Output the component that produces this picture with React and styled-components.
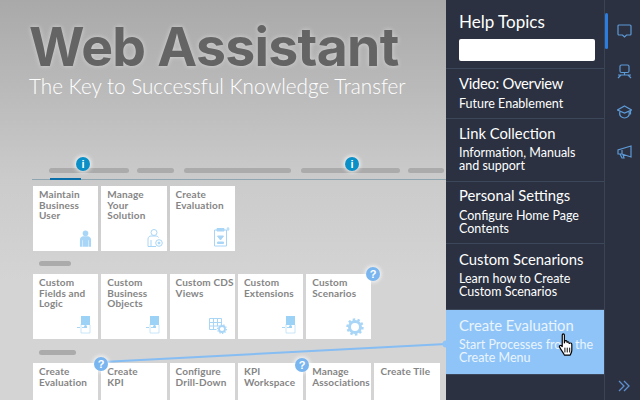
import React from "react";
import styled, { createGlobalStyle } from "styled-components";

const Global = createGlobalStyle`
  html, body { margin: 0; padding: 0; width: 640px; height: 400px; overflow: hidden; }
  #root { width: 640px; height: 400px; }
`;

const Page = styled.div`
  position: relative;
  display: flex;
  width: 640px;
  height: 400px;
  overflow: hidden;
  font-family: "Lato", "Liberation Sans", sans-serif;
`;

const Canvas = styled.main`
  width: 446px;
  height: 400px;
  flex: none;
  padding: 22px 0 0 29px;
  box-sizing: border-box;
  overflow: hidden;
  background: linear-gradient(180deg, #a9a9a9 0%, #cbcbcb 45%, #d4d4d4 70%, #d4d4d4 100%);
`;

const Title = styled.h1`
  margin: 0;
  font: 700 53.5px/49px "Inter", "Liberation Sans", sans-serif;
  letter-spacing: -0.7px;
  color: #646464;
  text-shadow: 0 0 5px rgba(255, 255, 255, 0.45);
  white-space: nowrap;
`;

const Subtitle = styled.div`
  margin-top: 2px;
  font: 300 20.7px/26px "Lato", sans-serif;
  color: #fff;
  white-space: nowrap;
`;

const Nav = styled.div`
  margin: 69px 0 0 3px;
  border-bottom: 1px solid #8fa5b0;
  height: 11px;
  position: relative;
  display: flex;
  width: 414px;
`;

const NavBars = styled.div`
  display: flex;
  margin-left: 17px;
  height: 5px;
`;

const Placeholder = styled.span`
  display: block;
  height: 5px;
  width: ${(p) => p.$w}px;
  margin-right: ${(p) => p.$gap || 0}px;
  flex: none;
  border-radius: 3px;
  background: #ababab;
`;

const ActiveMark = styled.span`
  position: absolute;
  left: 18px;
  bottom: -1px;
  width: 31px;
  height: 2px;
  background: #0a6ea8;
`;

const Grid = styled.div`
  display: grid;
  grid-template-columns: repeat(6, 65.3px);
  column-gap: 3px;
  margin: ${(p) => p.$top || 0}px 0 0 4px;
  width: 420px;
`;

const Tile = styled.div`
  position: relative;
  height: 65px;
  background: #fff;
  padding: 3px 0 0 6px;
  box-sizing: border-box;
  font: 700 10px/10.5px "Lato", sans-serif;
  color: #858585;
  letter-spacing: 0.15px;
  white-space: pre-line;
`;

const TileIcon = styled.svg`
  position: absolute;
  right: ${(p) => p.$r}px;
  bottom: ${(p) => p.$b}px;
`;

const GroupBar = styled.div`
  margin: ${(p) => p.$top}px 0 ${(p) => p.$bottom}px 10px;
`;

const Panel = styled.aside`
  width: 158px;
  height: 400px;
  flex: none;
  background: #2b3140;
  color: #fff;
`;

const PanelHead = styled.div`
  height: 69px;
  padding: 11px 9px 0 13px;
  box-sizing: border-box;
  border-bottom: 1px solid #3c4759;
`;

const PanelTitle = styled.div`
  font: 400 17px/21px "Lato", sans-serif;
  margin-bottom: 7px;
`;

const Search = styled.div`
  height: 22px;
  width: 136px;
  background: #fff;
  border-radius: 2px;
`;

const Topic = styled.div`
  box-sizing: border-box;
  height: ${(p) => p.$h}px;
  padding: ${(p) => p.$pad}px 6px 0 13px;
  border-bottom: 1px solid #3c4759;
  background: ${(p) => (p.$on ? "#8fc4f8" : "transparent")};
  color: ${(p) => (p.$on ? "#eaf4fd" : "#fff")};
`;

const TopicTitle = styled.div`
  font: 400 14.8px/18px "Lato", sans-serif;
  letter-spacing: ${(p) => (p.$tight ? "-0.3px" : "0")};
  margin-bottom: ${(p) => p.$mb}px;
  white-space: nowrap;
`;

const TopicText = styled.div`
  font: 400 12.5px/13px "Lato", sans-serif;
  white-space: pre-line;
`;

const Rail = styled.nav`
  position: relative;
  flex: 1;
  display: flex;
  flex-direction: column;
  align-items: center;
  background: #2b3140;
  border-left: 1px solid #3a4454;
  padding: 24px 0 0 3px;
  gap: 26px;
  color: #5d9ad8;
`;

const RailMark = styled.span`
  position: absolute;
  left: 0;
  top: 13px;
  width: 3px;
  height: 36px;
  border-radius: 2px;
  background: #2a7de1;
`;

const RailBottom = styled.div`
  position: absolute;
  bottom: 8px;
  left: 13px;
  color: #5d8fd0;
  display: flex;
`;

const Badge = styled.span`
  position: absolute;
  left: ${(p) => p.$x - 7}px;
  top: ${(p) => p.$y - 7}px;
  width: 14px;
  height: 14px;
  border-radius: 50%;
  background: ${(p) => (p.$q ? "#79b5ef" : "#0b8fc7")};
  box-shadow: 0 0 4px 1px rgba(255, 255, 255, 0.85);
  color: #fff;
  display: flex;
  align-items: center;
  justify-content: center;
  font: 900 11px/14px "Liberation Sans", sans-serif;
`;

const Connector = styled.svg`
  position: absolute;
  left: 0;
  top: 0;
  pointer-events: none;
`;

const Hand = styled.svg`
  position: absolute;
  left: 558px;
  top: 333px;
`;

const blue = "#a9d6f7";

const Person = () => (
  <TileIcon width="13" height="17" viewBox="0 0 14 18" $r={6} $b={4}>
    <circle cx="7" cy="3.5" r="3" fill={blue} />
    <path d="M1 18V10c0-2 2-3.5 3.5-3.5h5C11 6.500 13 8 13 10v8H10.500V11H10v7H4v-7h-.5v7z" fill={blue} />
  </TileIcon>
);

const PersonOutline = () => (
  <TileIcon width="16" height="18" viewBox="0 0 16 18" fill="none" stroke={blue} strokeWidth="1" $r={4} $b={4}>
    <circle cx="7" cy="3.500" r="3" />
    <path d="M1 17.500V10c0-2 1.500-3 3-3h5c1 0 2 .5 2.500 1.500M1 17.500h8M4 11v6" />
    <circle cx="12" cy="14" r="3.300" />
    <circle cx="12" cy="14" r="1" fill={blue} />
  </TileIcon>
);

const Clipboard = () => (
  <TileIcon width="16" height="20" viewBox="0 0 16 20" fill="none" stroke={blue} strokeWidth="1" $r={5} $b={4}>
    <path d="M10 3h2.500v16H.5V3H3" />
    <path d="M3 1.500h7V4H3z" fill={blue} />
    <path d="M14 0v4M12.500 2h3" />
    <path d="M3.500 9h6L6.500 13z" fill={blue} />
    <path d="M3.500 15h6v1.500h-6z" fill={blue} />
  </TileIcon>
);

const DoorIcon = () => (
  <TileIcon width="14" height="18" viewBox="0 0 14 18" fill="none" $r={7} $b={5}>
    <path d="M4 0h9v9H4z" fill="#9bd2f6" />
    <path d="M4 8v9h9V9" stroke={blue} strokeOpacity=".6" />
    <path d="M0 11.500h3M5 11.500h5" stroke={blue} />
    <circle cx="8.500" cy="10.500" r="1.500" fill="#9bd2f6" />
  </TileIcon>
);

const GridGear = () => (
  <TileIcon width="18" height="16" viewBox="0 0 18 16" fill="none" stroke={blue} strokeWidth="1" $r={8} $b={5}>
    <path d="M.5.500h12v7M.5.500v11h7M.5 4.500h12M.5 8h8M4.500.500v11M8.500.500v8" />
    <circle cx="13" cy="11" r="3" strokeWidth="1.800" />
    <circle cx="13" cy="11" r="4.400" strokeDasharray="1.300 1.400" strokeWidth="1.200" />
  </TileIcon>
);

const Gear = () => (
  <TileIcon width="18" height="18" viewBox="0 0 18 18" fill="none" stroke={blue} $r={7} $b={3}>
    <circle cx="9" cy="9" r="5.500" strokeWidth="3" />
    <circle cx="9" cy="9" r="7.500" strokeWidth="2.400" strokeDasharray="2.400 2.300" />
  </TileIcon>
);

const Chat = () => (
  <svg width="15" height="14" viewBox="0 0 15 14" fill="none" stroke="currentColor" strokeWidth="1.200">
    <path d="M2 1h11a1 1 0 0 1 1 1v8a1 1 0 0 1-1 1H9.500l-2 2-2-2H2a1 1 0 0 1-1-1V2a1 1 0 0 1 1-1z" />
  </svg>
);
const Training = () => (
  <svg width="15" height="15" viewBox="0 0 15 15" fill="none" stroke="currentColor" strokeWidth="1.200">
    <path d="M4.500 1h6a1.500 1.500 0 0 1 1.500 1.500V7a1.500 1.500 0 0 1-1.500 1.500h-6A1.500 1.500 0 0 1 3 7V2.500A1.500 1.500 0 0 1 4.500 1z" />
    <path d="M1 11h13M7.500 8.500V11M1 14l3-3M14 14l-3-3" />
  </svg>
);
const Cap = () => (
  <svg width="15" height="14" viewBox="0 0 15 14" fill="none" stroke="currentColor" strokeWidth="1.200">
    <path d="M7.500 1L14.500 5 7.500 8 .5 5z" />
    <path d="M3 6.500C1.500 11 5 13 7.500 13s6-2 4.500-6.500" />
    <path d="M13.500 5.500v4" />
  </svg>
);
const Megaphone = () => (
  <svg width="15" height="14" viewBox="0 0 15 14" fill="none" stroke="currentColor" strokeWidth="1.200">
    <path d="M14 1v11L5 9H1V5zM5 5v4M3 9l2 4h2L6 9.500" />
  </svg>
);
const Chevrons = () => (
  <svg width="12" height="12" viewBox="0 0 12 12" fill="none" stroke="currentColor" strokeWidth="1.300">
    <path d="M1 1l5 5-5 5M6 1l5 5-5 5" />
  </svg>
);

const tiles1 = [
  ["Maintain\nBusiness\nUser", <Person />],
  ["Manage\nYour\nSolution", <PersonOutline />],
  ["Create\nEvaluation", <Clipboard />],
];
const tiles2 = [
  ["Custom\nFields and\nLogic", <DoorIcon />],
  ["Custom\nBusiness\nObjects", <DoorIcon />],
  ["Custom CDS\nViews", <GridGear />],
  ["Custom\nExtensions", <DoorIcon />],
  ["Custom\nScenarios", <Gear />],
];
const tiles3 = ["Create\nEvaluation", "Create\nKPI", "Configure\nDrill-Down", "KPI\nWorkspace", "Manage\nAssociations", "Create Tile"];

const topics = [
  { h: 50, pad: 5, mb: 5, tight: true, t: "Video: Overview", d: "Future Enablement" },
  { h: 63, pad: 5, mb: 4, t: "Link Collection", d: "Information, Manuals\nand support" },
  { h: 62, pad: 4, mb: 5, t: "Personal Settings", d: "Configure Home Page\nContents" },
  { h: 66, pad: 6, mb: 4, t: "Custom Scenarions", d: "Learn how to Create\nCustom Scenarios" },
  { h: 65, pad: 6, mb: 4, t: "Create Evaluation", d: "Start Processes from the\nCreate Menu", on: true },
];

export default function App() {
  return (
    <Page>
      <Global />
      <Canvas>
        <Title>Web Assistant</Title>
        <Subtitle>The Key to Successful Knowledge Transfer</Subtitle>
        <Nav>
          <NavBars>
            <Placeholder $w={80} $gap={8} />
            <Placeholder $w={37} $gap={10} />
            <Placeholder $w={107} $gap={10} />
            <Placeholder $w={99} $gap={8} />
            <Placeholder $w={36} />
          </NavBars>
          <ActiveMark />
        </Nav>
        <Grid $top={6}>
          {tiles1.map(([t, icon]) => (
            <Tile key={t}>{t}{icon}</Tile>
          ))}
        </Grid>
        <GroupBar $top={10} $bottom={8}><Placeholder $w={32} /></GroupBar>
        <Grid>
          {tiles2.map(([t, icon]) => (
            <Tile key={t}>{t}{icon}</Tile>
          ))}
        </Grid>
        <GroupBar $top={11} $bottom={8}><Placeholder $w={37} /></GroupBar>
        <Grid>
          {tiles3.map((t) => (
            <Tile key={t}>{t}</Tile>
          ))}
        </Grid>
      </Canvas>
      <Panel>
        <PanelHead>
          <PanelTitle>Help Topics</PanelTitle>
          <Search />
        </PanelHead>
        {topics.map((x) => (
          <Topic key={x.t} $h={x.h} $pad={x.pad} $on={x.on}>
            <TopicTitle $mb={x.mb} $tight={x.tight}>{x.t}</TopicTitle>
            <TopicText>{x.d}</TopicText>
          </Topic>
        ))}
      </Panel>
      <Rail>
        <RailMark />
        <Chat />
        <Training />
        <Cap />
        <Megaphone />
        <RailBottom><Chevrons /></RailBottom>
      </Rail>
      <Connector width="640" height="400">
        <line x1="102" y1="362" x2="446" y2="344" stroke="#86bdf3" strokeWidth="2" />
        <circle cx="446" cy="344" r="3.500" fill="#8fc4f8" />
      </Connector>
      <Badge $x={83} $y={164}>i</Badge>
      <Badge $x={352} $y={164}>i</Badge>
      <Badge $x={373} $y={274} $q>?</Badge>
      <Badge $x={101} $y={364} $q>?</Badge>
      <Badge $x={302} $y={365} $q>?</Badge>
      <Hand width="17" height="24" viewBox="0 0 16 22">
        <path d="M4 1.500c0-1.300 2-1.300 2 0V9l.5-2c1.500-.5 2 0 2 1.500 1-.8 2-.5 2 1 1-.7 2.500-.5 2.500 1V16c0 2-1 3-1.500 4.500H6C5 18 3 16 1.500 13c-.8-1.500 1-2.500 2.500-.5z" fill="#fff" stroke="#000" strokeWidth="1.100" strokeLinejoin="round" />
        <path d="M6.500 13.500V18M8.700 13.500V18M11 13.500V18" stroke="#000" strokeWidth=".9" />
      </Hand>
    </Page>
  );
}
